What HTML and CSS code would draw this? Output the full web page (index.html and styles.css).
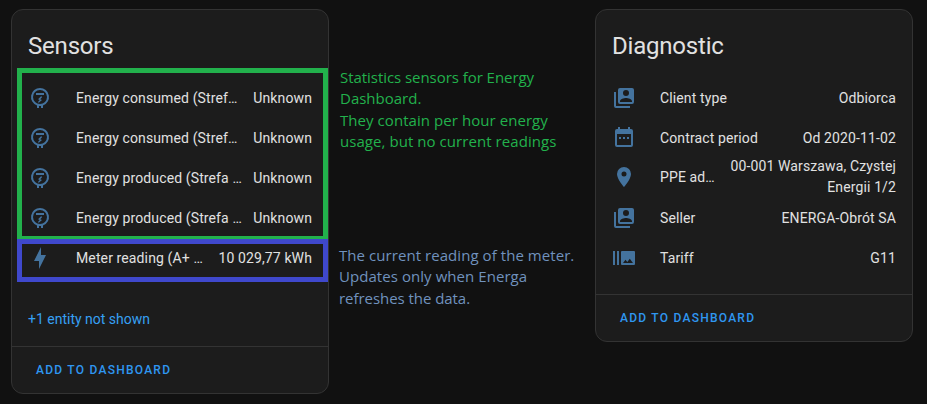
FILE: index.html
```html
<!DOCTYPE html>
<html lang="en">
<head>
<meta charset="utf-8">
<title>Device sensors</title>
<link rel="stylesheet" href="styles.css">
</head>
<body>
<svg class="defs" width="0" height="0">
  <symbol id="meter" viewBox="0 0 24 24"><path fill-rule="evenodd" d="M12 2a9 9 0 0 0-3 17.480V22h2v-2h2v2h2v-2.520A9 9 0 0 0 12 2m0 16a7 7 0 1 1 0-14 7 7 0 0 1 0 14M8 7h8v2H8zM13.250 10 10 13.250l1.750.75-1.500 1.500.25 1.500 3.500-3-1.750-.75L14 11.250z"/></symbol>
  <symbol id="bolt" viewBox="0 0 24 24"><path d="M11 15H6l7-14v8h5l-7 14z"/></symbol>
  <symbol id="account" viewBox="0 0 24 24"><path d="M20 2H8a2 2 0 0 0-2 2v12a2 2 0 0 0 2 2h12a2 2 0 0 0 2-2V4a2 2 0 0 0-2-2m-6 2a3 3 0 0 1 3 3 3 3 0 0 1-3 3 3 3 0 0 1-3-3 3 3 0 0 1 3-3m6 12H8v-1c0-2 4-3.100 6-3.100s6 1.100 6 3.100zM4 6H2v14a2 2 0 0 0 2 2h14v-2H4z"/></symbol>
  <symbol id="calendar" viewBox="0 0 24 24"><path d="M7 11h2v2H7zm14-6v14a2 2 0 0 1-2 2H5a2 2 0 0 1-2-2V5a2 2 0 0 1 2-2h1V1h2v2h8V1h2v2h1a2 2 0 0 1 2 2M5 19h14V8H5zm10-6v-2h2v2zm-4 0v-2h2v2z"/></symbol>
  <symbol id="marker" viewBox="0 0 24 24"><path d="M12 11.500A2.500 2.500 0 0 1 9.500 9 2.500 2.500 0 0 1 12 6.500 2.500 2.500 0 0 1 14.500 9a2.500 2.500 0 0 1-2.500 2.500M12 2a7 7 0 0 0-7 7c0 5.250 7 13 7 13s7-7.750 7-13a7 7 0 0 0-7-7"/></symbol>
  <symbol id="burst" viewBox="0 0 24 24"><path d="M1 5h2v14H1zm4 0h2v14H5zm17 0H10a1 1 0 0 0-1 1v12a1 1 0 0 0 1 1h12a1 1 0 0 0 1-1V6a1 1 0 0 0-1-1M11 17l2.500-3.150L15.290 16l2.500-3.220L21 17z"/></symbol>
</svg>
<main class="page">
  <section class="card">
    <h1 class="title">Sensors</h1>
    <div class="mark mark-green">
      <div class="row"><svg class="icon"><use href="#meter"/></svg><span class="name">Energy consumed (Stref…</span><span class="value">Unknown</span></div>
      <div class="row"><svg class="icon"><use href="#meter"/></svg><span class="name">Energy consumed (Stref…</span><span class="value">Unknown</span></div>
      <div class="row"><svg class="icon"><use href="#meter"/></svg><span class="name">Energy produced (Strefa …</span><span class="value">Unknown</span></div>
      <div class="row"><svg class="icon"><use href="#meter"/></svg><span class="name">Energy produced (Strefa …</span><span class="value">Unknown</span></div>
    </div>
    <div class="mark mark-blue">
      <div class="row"><svg class="icon"><use href="#bolt"/></svg><span class="name">Meter reading (A+ …</span><span class="value">10 029,77 kWh</span></div>
    </div>
    <a class="more">+1 entity not shown</a>
    <footer class="footer"><a class="button">ADD TO DASHBOARD</a></footer>
  </section>
  <aside class="notes">
    <p class="note note-green"><span class="tight">Statistics sensors for Energy</span><br>Dashboard.<br><span class="loose">They contain per hour energy</span><br><span class="loose">usage, but no current readings</span></p>
    <p class="note note-blue"><span class="loose">The current reading of the meter.</span><br><span class="loose">Updates only when Energa</span><br><span class="tight">refreshes the data.</span></p>
  </aside>
  <section class="card">
    <h1 class="title">Diagnostic</h1>
    <div class="rows">
      <div class="row"><svg class="icon"><use href="#account"/></svg><span class="name">Client type</span><span class="value">Odbiorca</span></div>
      <div class="row"><svg class="icon"><use href="#calendar"/></svg><span class="name">Contract period</span><span class="value">Od 2020-11-02</span></div>
      <div class="row row-tall"><svg class="icon"><use href="#marker"/></svg><span class="name">PPE ad…</span><span class="value">00-001 Warszawa, Czystej<br>Energii 1/2</span></div>
      <div class="row"><svg class="icon"><use href="#account"/></svg><span class="name">Seller</span><span class="value">ENERGA-Obrót SA</span></div>
      <div class="row"><svg class="icon"><use href="#burst"/></svg><span class="name">Tariff</span><span class="value">G11</span></div>
    </div>
    <footer class="footer"><a class="button">ADD TO DASHBOARD</a></footer>
  </section>
</main>
</body>
</html>
```
FILE: styles.css
```css
* { box-sizing: border-box; }
body {
  margin: 0;
  background: #111;
  color: #e1e1e1;
  font: 14px/20px Roboto, sans-serif;
  overflow: hidden;
}
.defs { display: block; }
.page {
  display: grid;
  grid-template-columns: 318px 266px 318px;
  align-items: start;
  padding: 9px 0 0 11px;
}
.card {
  background: #1c1c1c;
  border: 1px solid #333;
  border-radius: 12px;
}
.title {
  margin: 0;
  height: 58px;
  padding: 12px 16px 0;
  font-size: 24px;
  line-height: 48px;
  font-weight: 400;
  letter-spacing: -0.2px;
}
.mark {
  margin-left: 5px;
  width: 311px;
  border: 5px solid;
  padding: 0 11px 0 6px;
}
.mark-green {
  height: 171px;
  border-color: #22b14c;
  border-bottom-width: 3px;
  padding-top: 5px;
}
.mark-blue {
  height: 43px;
  border-color: #3f48cc;
}
.mark-blue .row { margin-top: -6px; }
.row {
  display: flex;
  align-items: center;
  height: 40px;
  letter-spacing: 0.12px;
}
.row-tall { line-height: 21px; padding-bottom: 2px; }
.rows { padding: 10px 16px 0; height: 226px; }
.icon {
  flex: none;
  width: 24px;
  height: 24px;
  margin-right: 24px;
  fill: #44739e;
}
.name {
  flex: 1;
  min-width: 0;
  white-space: nowrap;
}
.value {
  flex: none;
  margin-left: 8px;
  text-align: right;
}
.more {
  display: block;
  height: 64px;
  padding: 27px 16px 0;
  color: #36a0f4;
}
.footer {
  height: 47px;
  border-top: 1px solid #333;
  padding: 12px 24px 0;
}
.button {
  color: #2f97f1;
  font-size: 12px;
  font-weight: 500;
  letter-spacing: 1.25px;
}
.notes { padding: 58px 0 0 11px; }
.note {
  margin: 0;
  font: 15px/21.3px "Open Sans", sans-serif;
  white-space: nowrap;
}
.tight { letter-spacing: -0.05px; }
.loose { letter-spacing: 0.06px; }
.note-green { height: 178px; color: #22b14c; }
.note-blue { color: #7092be; margin-left: -1px; }
```
